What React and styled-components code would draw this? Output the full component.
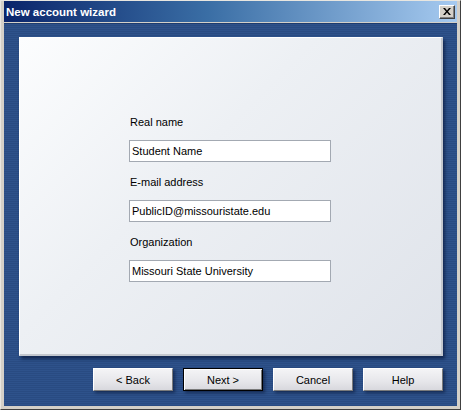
import React from 'react';
import styled, { createGlobalStyle } from 'styled-components';

const Global = createGlobalStyle`
  html, body { margin: 0; padding: 0; background: #d4d0c8; }
  body { font-family: "Liberation Sans", Arial, sans-serif; }
`;

const Window = styled.div`
  width: 461px;
  height: 410px;
  box-sizing: border-box;
  background: #d4d0c8;
  padding: 0 3px 3px 3px;
  display: flex;
  flex-direction: column;
  border-left: 1px solid #e8e6e0;
  border-top: 1px solid #e8e6e0;
  border-right: 1px solid #404040;
  border-bottom: 1px solid #404040;
`;

const TitleBar = styled.div`
  height: 21px;
  flex: none;
  display: flex;
  align-items: center;
  padding: 0 2px 0 2px;
  margin-bottom: 1px;
  background: linear-gradient(to right, #0a246a 0%, #3a6ea5 45%, #a6caf0 100%);
`;

const Title = styled.div`
  color: #fff;
  font-family: "Liberation Sans", Arial, sans-serif;
  font-weight: bold;
  font-size: 11.5px;
`;

const CloseButton = styled.div`
  margin-left: auto;
  width: 16px;
  height: 14px;
  box-sizing: border-box;
  background: #d4d0c8;
  border: 1px solid;
  border-color: #fff #404040 #404040 #fff;
  box-shadow: inset -1px -1px #808080;
  display: flex;
  align-items: center;
  justify-content: center;
`;

const Body = styled.div`
  flex: 1;
  display: flex;
  flex-direction: column;
  padding: 13px 14px 15px 15px;
  background: repeating-linear-gradient(to bottom, #2e528b 0px, #2e528b 1px, #294b82 1px, #294b82 2px);
  border-top: 1px solid #1e3c6e;
`;

const Panel = styled.div`
  height: 319px;
  box-sizing: border-box;
  border-left: 1px solid #ffffff;
  border-top: 1px solid #ffffff;
  border-right: 2px solid #c3c7ce;
  border-bottom: 2px solid #c3c7ce;
  background: linear-gradient(135deg, #fcfdfe 0%, #edf0f4 40%, #dfe3ea 100%);
  box-shadow: 2px 3px 3px rgba(8, 22, 55, 0.65);
  padding: 78px 0 0 109px;
`;

const Form = styled.div`
  display: flex;
  flex-direction: column;
  align-items: flex-start;
`;

const Label = styled.div`
  font-size: 11px;
  line-height: 13px;
  color: #000;
  padding-left: 1px;
  margin-bottom: 11px;
`;

const Field = styled.div`
  width: 202px;
  height: 22px;
  box-sizing: border-box;
  background: #fff;
  border: 1px solid #a3a9b2;
  padding-left: 2px;
  display: flex;
  align-items: center;
  font-size: 11px;
  color: #000;
  margin-bottom: 14px;
`;

const ButtonRow = styled.div`
  margin-top: 12px;
  display: flex;
  justify-content: flex-end;
  gap: 10px;
`;

const Button = styled.div`
  width: 80px;
  height: 23px;
  box-sizing: border-box;
  display: flex;
  align-items: center;
  justify-content: center;
  font-size: 11px;
  color: #000;
  background: linear-gradient(to bottom, #f4f4f6 0%, #e6e6ea 60%, #d8d8dd 100%);
  border: 1px solid;
  border-color: ${p => (p.$default ? '#000' : '#ffffff #7a7a7a #7a7a7a #ffffff')};
  box-shadow: ${p => (p.$default ? 'inset 1px 1px #fff, inset -1px -1px #7a7a7a, ' : '')}2px 2px 3px rgba(5, 18, 50, 0.55);
`;

const fields = [
  { label: 'Real name', value: 'Student Name' },
  { label: 'E-mail address', value: 'PublicID@missouristate.edu' },
  { label: 'Organization', value: 'Missouri State University' },
];

export default function App() {
  return (
    <>
      <Global />
      <Window>
        <TitleBar>
          <Title>New account wizard</Title>
          <CloseButton>
            <svg width="8" height="7" viewBox="0 0 8 7">
              <path d="M0 0h2l2 2.5L6 0h2L5 3.5 8 7H6L4 4.5 2 7H0l3-3.5z" fill="#000" />
            </svg>
          </CloseButton>
        </TitleBar>
        <Body>
          <Panel>
            <Form>
              {fields.map(f => (
                <React.Fragment key={f.label}>
                  <Label>{f.label}</Label>
                  <Field>{f.value}</Field>
                </React.Fragment>
              ))}
            </Form>
          </Panel>
          <ButtonRow>
            <Button>&lt; Back</Button>
            <Button $default>Next &gt;</Button>
            <Button>Cancel</Button>
            <Button>Help</Button>
          </ButtonRow>
        </Body>
      </Window>
    </>
  );
}
